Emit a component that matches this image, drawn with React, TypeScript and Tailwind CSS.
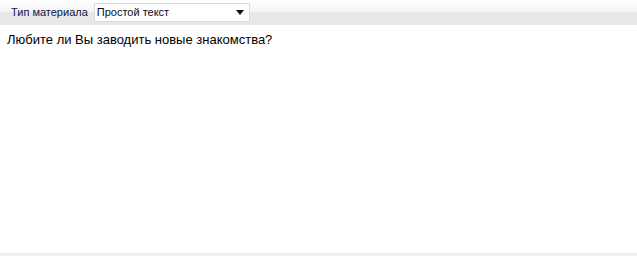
export default function App() {
  return (
    <div className="flex h-[256px] w-[637px] flex-col bg-white font-['Liberation_Sans',Arial,sans-serif]">
      {/* Toolbar */}
      <div className="flex h-[25px] items-center bg-[linear-gradient(to_bottom,#ffffff_0px,#f3f3f3_12px,#e8e8e8_12px,#e8e8e8_25px)] pl-[11px]">
        <span className="text-[11px] text-[#14144a]">Тип материала</span>
        <div className="ml-[6px] flex h-[19px] w-[156px] items-center justify-between border border-[#dcdcdc] bg-white pl-[2px] pr-[5px]">
          <span className="text-[11px] text-[#0a0a2a]">Простой текст</span>
          <svg width="8" height="5" viewBox="0 0 8 5">
            <path d="M0 0H8L4 5Z" fill="#111" />
          </svg>
        </div>
      </div>
      {/* Content */}
      <div className="flex-1 px-[7px] pt-[5px] text-[13px] text-black">
        Любите ли Вы заводить новые знакомства?
      </div>
      <div className="h-[3px] bg-[#efefef]" />
    </div>
  );
}
